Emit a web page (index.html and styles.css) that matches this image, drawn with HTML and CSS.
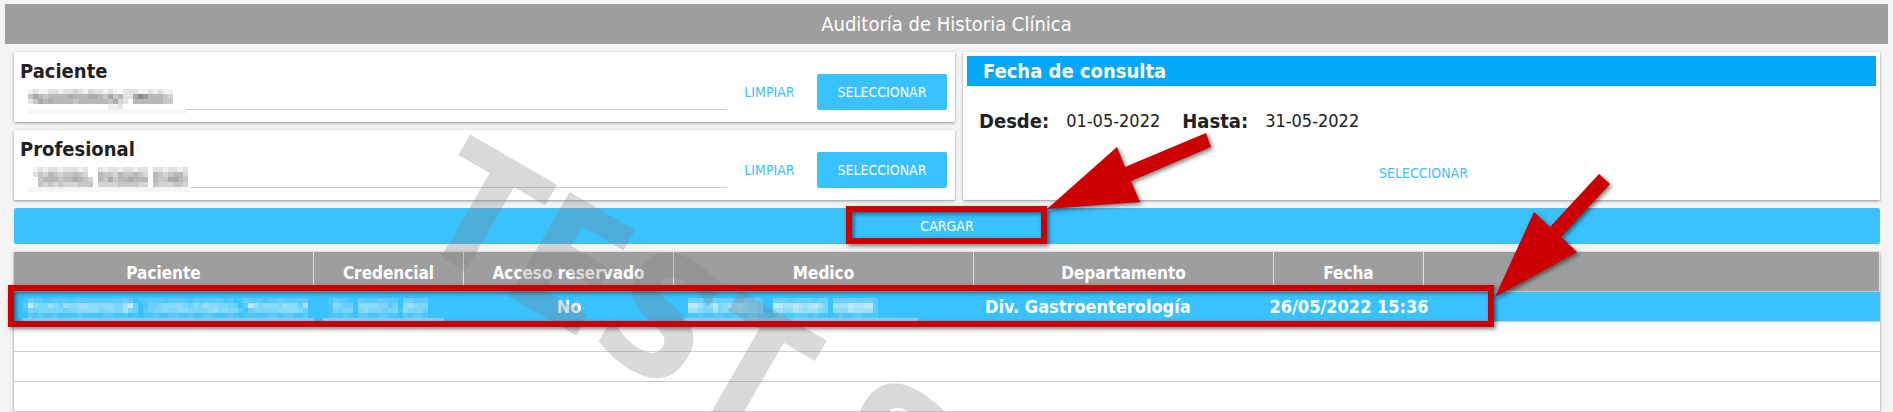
FILE: index.html
```
<!DOCTYPE html>
<html lang="es">

<head>
  <meta charset="UTF-8">
  <title>Auditoría de Historia Clínica</title>
  <link rel="stylesheet" href="styles.css">
</head>

<body>

  <h1 class="titulo">Auditoría de Historia Clínica</h1>

  <main class="contenido">
    <div class="filtros">
      <div class="columna">
        <section class="card persona">
          <h2>Paciente</h2>
          <div class="campo">
            <div class="valor"><svg class="mosaico" id="mosPaciente" width="158" height="25"></svg></div>
            <button class="plano">LIMPIAR</button>
            <button class="lleno">SELECCIONAR</button>
          </div>
        </section>
        <section class="card persona">
          <h2>Profesional</h2>
          <div class="campo">
            <div class="valor"><svg class="mosaico" id="mosProfesional" width="163" height="25"></svg></div>
            <button class="plano">LIMPIAR</button>
            <button class="lleno">SELECCIONAR</button>
          </div>
        </section>
      </div>

      <section class="card fechas">
        <h2>Fecha de consulta</h2>
        <div class="rango">
          <strong>Desde:</strong><span>01-05-2022</span>
          <strong>Hasta:</strong><span>31-05-2022</span>
        </div>
        <button class="plano">SELECCIONAR</button>
      </section>
    </div>

    <button class="cargar">CARGAR</button>

    <table class="tabla">
      <colgroup>
        <col class="c300"><col class="c150"><col class="c210"><col class="c300"><col class="c300"><col class="c150"><col>
      </colgroup>
      <thead>
        <tr>
          <th>Paciente</th>
          <th>Credencial</th>
          <th>Acceso reservado</th>
          <th>Medico</th>
          <th>Departamento</th>
          <th>Fecha</th>
          <th></th>
        </tr>
      </thead>
      <tbody>
        <tr class="activa">
          <td class="oculto"><svg class="mosaico" id="mosFilaPaciente" width="291" height="23"></svg></td>
          <td class="oculto"><svg class="mosaico" id="mosCredencial" width="121" height="23"></svg></td>
          <td class="centro">No</td>
          <td class="oculto"><svg class="mosaico" id="mosMedico" width="235" height="23"></svg></td>
          <td>Div. Gastroenterología</td>
          <td><div class="fecha">26/05/2022 15:36</div></td>
          <td></td>
        </tr>
        <tr><td colspan="7"></td></tr>
        <tr><td colspan="7"></td></tr>
        <tr><td colspan="7"></td></tr>
      </tbody>
    </table>
  </main>

  <svg class="capa">
    <text class="marca" transform="translate(409 239) rotate(30)">TEST S</text>
    <g class="notas">
      <rect x="849" y="209" width="195" height="32" />
      <rect x="11" y="288" width="1480" height="36" />
      <path d="M1047 209L1117 147L1125 167L1206 133L1211 147L1131 181L1140 202Z" />
      <path d="M1495 297L1534 212L1550 227L1599 174L1610 184L1561 237L1577 252Z" />
    </g>
  </svg>

  <script>
    // datos ocultos: cada cifra es la intensidad de un bloque de 5px
    const mosaicos = {
      mosPaciente: ['12112212232132212102221121211', '46545555655566546452268755543', '24656555545555554632055555544', '00000000000000001120000000000'],
      mosProfesional: ['01212212221200212212212202212212', '02435434454300544354454305434553', '00455545565430546455655505446654', '00434343334440333344443304333443'],
      mosFilaPaciente: ['132211222122222222223201222212222122222212013222122322222', '285446536556655555446830133455554354655443302864555465536', '143444443445555445446430234454455444456454420344444555543', '021211211112111122111010112112211211221112101111122122112'],
      mosCredencial: ['013221032223222033222', '015433055554424056544', '014344045444344154443', '011121022112211021221'],
      mosMedico: ['03332233332233320033323333233033333333200', '08864584565654430088668767864076687788200', '06654464545554430066557656654055576666200', '01121122112112211012112221211012112211100']
    };

    function dibujarMosaico(id, filas) {
      const svg = document.getElementById(id);
      let rects = '';
      filas.forEach((fila, y) => {
        fila.split('').forEach((n, x) => {
          rects += `<rect x="${x * 5}" y="${y * 5}" width="5" height="5" fill-opacity="${n / 12}"/>`;
        });
      });
      svg.innerHTML = rects;
    }

    for (const id in mosaicos) {
      dibujarMosaico(id, mosaicos[id]);
    }
  </script>

</body>

</html>
```
FILE: styles.css
```
* {
  box-sizing: border-box;
}

body {
  position: relative;
  height: 100vh;
  margin: 0;
  padding: 4px 5px 0;
  overflow: hidden;
  background: #f4f4f4;
  color: #212121;
  font-family: Tahoma, 'DejaVu Sans Condensed', 'Noto Sans', sans-serif;
}

h1,
h2 {
  margin: 0;
}

.titulo {
  background: #9e9e9e;
  color: #fff;
  font-size: 20px;
  font-weight: normal;
  line-height: 40px;
  text-align: center;
}

.contenido {
  padding: 8px 8px 0 9px;
}

.filtros {
  display: grid;
  grid-template-columns: 941fr 917fr;
  gap: 8px;
}

.columna {
  display: grid;
  gap: 8px;
}

.card {
  background: #fff;
  border-radius: 1px;
  box-shadow: 0 1px 3px rgba(0, 0, 0, 0.4);
}

.persona {
  height: 70px;
  padding: 8px 8px 0 6px;
}

.persona h2 {
  font-size: 20px;
  line-height: 22px;
}

.campo {
  display: flex;
  align-items: flex-start;
  margin-top: -8px;
}

.valor {
  flex: 1;
  height: 36px;
  margin-left: 8px;
  padding-top: 15px;
  border-bottom: 1px solid #ccc;
}

.valor .mosaico {
  border-bottom: 5px solid #f6f6f6;
}

button {
  border: none;
  border-radius: 2px;
  font-family: inherit;
  font-size: 14px;
  height: 36px;
}

.plano {
  width: 85px;
  padding: 0;
  background: none;
  color: #3ac1ff;
}

.lleno {
  width: 130px;
  margin-left: 5px;
  padding: 0;
  background: #3ac1ff;
  color: #fff;
}

.fechas {
  display: flex;
  flex-direction: column;
  align-items: center;
  padding: 4px;
}

.fechas h2 {
  width: 100%;
  padding-left: 16px;
  background: #03a9f8;
  color: #fff;
  font-size: 20px;
  line-height: 30px;
}

.rango {
  display: flex;
  align-items: center;
  width: 100%;
  padding: 20px 12px 19px;
  font-size: 18px;
  line-height: 30px;
}

.rango strong {
  font-size: 20px;
}

.rango span {
  margin: 0 22px 0 17px;
}

.cargar {
  display: block;
  width: 100%;
  margin: 8px 0;
  background: #3ac1ff;
  color: #fff;
}

.tabla {
  width: 100%;
  table-layout: fixed;
  border-collapse: separate;
  border-spacing: 0;
  background: #fff;
  box-shadow: 0 1px 3px rgba(0, 0, 0, 0.4);
}

.c300 {
  width: 300px;
}

.c150 {
  width: 150px;
}

.c210 {
  width: 210px;
}

.tabla th {
  height: 40px;
  padding: 2px 0 0;
  border-right: 1px solid #e0e0e0;
  border-bottom: 1px solid #ccc;
  background: #9e9e9e;
  color: #fff;
  font-size: 17px;
}

.tabla td {
  height: 30px;
  padding: 0 11px;
  border-bottom: 1px solid #ccc;
  font-size: 18px;
  line-height: 20px;
  font-weight: bold;
  white-space: nowrap;
}

.tabla .activa td {
  background: #3ac1ff;
  color: #fff;
}

.tabla .centro {
  text-align: center;
}

/* la fecha es mas ancha que su columna */
.fecha {
  display: flex;
  justify-content: center;
}

.tabla .oculto {
  padding: 0 0 0 9px;
  vertical-align: bottom;
}

.mosaico {
  display: block;
  position: relative;
  background: #fff;
  fill: #555;
}

.activa .mosaico {
  border-bottom: 3px solid #7fd3fa;
  background: none;
  fill: #fff;
}

.capa {
  position: absolute;
  top: 0;
  left: 0;
  width: 100%;
  height: 100%;
  pointer-events: none;
}

.marca {
  fill: #808080;
  fill-opacity: 0.3;
  font-size: 166px;
  font-weight: bold;
}

.notas {
  filter: drop-shadow(2px 2px 2px rgba(0, 0, 0, 0.5));
}

.notas rect {
  fill: none;
  stroke: #c00;
  stroke-width: 6px;
}

.notas path {
  fill: #c00;
}
```
